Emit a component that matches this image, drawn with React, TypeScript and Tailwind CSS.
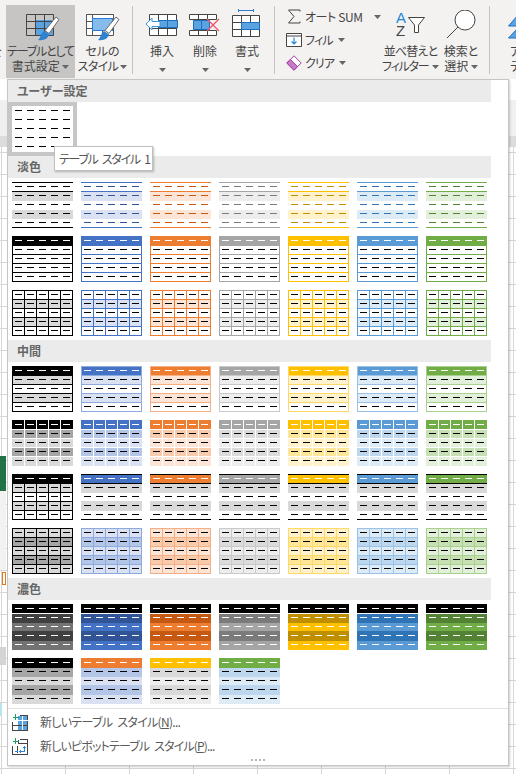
import React from 'react';

// Tabellen-Vorschauen: 61x46 px, 5 Spalten, 5 Zeilen
const DX = [3, 15, 27, 39, 51];
const DY = [4, 13, 22, 31, 40];

type Accent = { a: string; d: string; light: string; mid: string; border: string; d2a: string; d2b: string };

const ACCENTS: Accent[] = [
  { a: '#000000', d: '#000000', light: '#d9d9d9', mid: '#a6a6a6', border: '#000000', d2a: '#404040', d2b: '#737373' },
  { a: '#4472c4', d: '#305496', light: '#d9e1f2', mid: '#b4c6e7', border: '#8ea9db', d2a: '#305496', d2b: '#4472c4' },
  { a: '#ed7d31', d: '#c65911', light: '#fce4d6', mid: '#f8cbad', border: '#f4b084', d2a: '#c65911', d2b: '#ed7d31' },
  { a: '#a5a5a5', d: '#7b7b7b', light: '#ededed', mid: '#dbdbdb', border: '#c9c9c9', d2a: '#7b7b7b', d2b: '#a5a5a5' },
  { a: '#ffc000', d: '#bf8f00', light: '#fff2cc', mid: '#ffe699', border: '#ffd966', d2a: '#bf8f00', d2b: '#ffc000' },
  { a: '#5b9bd5', d: '#2f75b5', light: '#ddebf7', mid: '#bdd7ee', border: '#9bc2e6', d2a: '#2f75b5', d2b: '#5b9bd5' },
  { a: '#70ad47', d: '#548235', light: '#e2efda', mid: '#c6e0b4', border: '#a9d08e', d2a: '#548235', d2b: '#70ad47' },
];

type R = [number, number, number, number, string];

const box = (c: string): R[] => [
  [0, 0, 61, 1, c],
  [0, 45, 61, 1, c],
  [0, 0, 1, 46, c],
  [60, 0, 1, 46, c],
];
const hLines = (c: string): R[] => [9, 18, 27, 36].map((y) => [0, y, 61, 1, c] as R);
const vLines = (c: string): R[] => [12, 24, 36, 48].map((x) => [x, 0, 1, 46, c] as R);

function Swatch({ rects, dash }: { rects: R[]; dash: (row: number) => string }) {
  return (
    <svg width={61} height={46} viewBox="0 0 61 46" shapeRendering="crispEdges" className="block">
      {rects.map((r, i) => (
        <rect key={i} x={r[0]} y={r[1]} width={r[2]} height={r[3]} fill={r[4]} />
      ))}
      {DY.map((y, row) =>
        DX.map((x) => <rect key={`${row}-${x}`} x={x} y={y} width={7} height={1} fill={dash(row)} />)
      )}
    </svg>
  );
}

const headerWhite = (row: number) => (row === 0 ? '#ffffff' : '#000000');

// Zeilen im Stil "Zellen mit weißen Trennlinien"
function cellRects(head: string, dark: string, light: string): R[] {
  return [
    [0, 0, 61, 9, head],
    [0, 10, 61, 8, dark],
    [0, 19, 61, 8, light],
    [0, 28, 61, 8, dark],
    [0, 37, 61, 9, light],
    ...vLines('#ffffff'),
  ];
}

const lightStyles = [
  ACCENTS.map((c) => (
    <Swatch
      rects={[
        [0, 10, 61, 9, c.light],
        [0, 28, 61, 9, c.light],
        [0, 0, 61, 1, c.a],
        [0, 9, 61, 1, c.a],
        [0, 45, 61, 1, c.a],
      ]}
      dash={() => c.d}
    />
  )),
  ACCENTS.map((c) => (
    <Swatch rects={[[0, 0, 61, 9, c.a], ...box(c.a), ...hLines(c.a)]} dash={headerWhite} />
  )),
  ACCENTS.map((c) => (
    <Swatch
      rects={[
        [0, 9, 61, 9, c.light],
        [0, 27, 61, 9, c.light],
        ...box(c.a),
        ...hLines(c.a),
        ...vLines(c.a),
      ]}
      dash={() => '#000000'}
    />
  )),
];

const mediumStyles = [
  ACCENTS.map((c) => (
    <Swatch
      rects={[
        [0, 0, 61, 9, c.a],
        [0, 9, 61, 9, c.light],
        [0, 27, 61, 9, c.light],
        ...box(c.border),
        ...hLines(c.border),
      ]}
      dash={headerWhite}
    />
  )),
  ACCENTS.map((c) => <Swatch rects={cellRects(c.a, c.mid, c.light)} dash={headerWhite} />),
  ACCENTS.map((c, i) =>
    i === 0 ? (
      <Swatch
        rects={[
          [0, 0, 61, 9, '#000000'],
          [0, 9, 61, 9, '#d9d9d9'],
          [0, 27, 61, 9, '#d9d9d9'],
          ...box('#000000'),
          ...hLines('#000000'),
          ...vLines('#000000'),
        ]}
        dash={headerWhite}
      />
    ) : (
      <Swatch
        rects={[
          [0, 0, 61, 9, c.a],
          [0, 0, 61, 1, '#000000'],
          [0, 9, 61, 1, '#000000'],
          [0, 10, 61, 9, '#d9d9d9'],
          [0, 27, 61, 10, '#d9d9d9'],
          [0, 45, 61, 1, '#000000'],
        ]}
        dash={headerWhite}
      />
    )
  ),
  ACCENTS.map((c) => (
    <Swatch
      rects={[
        [0, 0, 61, 46, c.light],
        [0, 9, 61, 9, c.mid],
        [0, 27, 61, 9, c.mid],
        ...box(c.border),
        ...hLines(c.border),
        ...vLines(c.border),
      ]}
      dash={() => '#000000'}
    />
  )),
];

const darkRow1 = ACCENTS.map((c) => (
  <Swatch
    rects={[
      [0, 0, 61, 9, '#000000'],
      [0, 10, 61, 9, c.d2a],
      [0, 19, 61, 8, c.d2b],
      [0, 27, 61, 10, c.d2a],
      [0, 37, 61, 9, c.d2b],
    ]}
    dash={() => '#ffffff'}
  />
));

const stripe = (head: string, dark: string, light: string): R[] => [
  [0, 0, 61, 10, head],
  [0, 10, 61, 9, dark],
  [0, 19, 61, 8, light],
  [0, 27, 61, 10, dark],
  [0, 37, 61, 9, light],
];

const darkRow2 = [
  stripe('#000000', '#a6a6a6', '#d9d9d9'),
  stripe('#ed7d31', '#b4c6e7', '#d9e1f2'),
  stripe('#ffc000', '#d9d9d9', '#ededed'),
  stripe('#70ad47', '#bdd7ee', '#ddebf7'),
].map((rects) => <Swatch rects={rects} dash={headerWhite} />);

function Section({ title }: { title: string }) {
  return (
    <div className="h-[22px] w-[483px] bg-[#ebebeb] pl-[9px] text-[12px] font-bold leading-[21px] text-[#666666]">
      {title}
    </div>
  );
}

function Rows({ rows }: { rows: React.ReactNode[][] }) {
  return (
    <div className="flex w-[483px] flex-col gap-2 p-1">
      {rows.map((row, i) => (
        <div key={i} className="flex gap-2">
          {row.map((cell, j) => (
            <div key={j}>{cell}</div>
          ))}
        </div>
      ))}
    </div>
  );
}

function Caret({ className = '' }: { className?: string }) {
  return (
    <svg width={7} height={4} viewBox="0 0 7 4" className={`inline-block ${className}`}>
      <path d="M0 0h7L3.5 4z" fill="#666666" />
    </svg>
  );
}

function Brush() {
  return (
    <g>
      <path d="M30 7l3 2.500-10 14-4-3z" fill="#ffffff" stroke="#6b6b6b" />
      <path d="M18 21l5 3.500c-1 4-5 6.500-11 5.500 3-2 2.500-7 6-9z" fill="#2e83d0" />
    </g>
  );
}

function TableStyleIcon() {
  return (
    <svg width={34} height={32} viewBox="0 0 34 32" className="mb-px ml-[5px]">
      <rect x="9.500" y="10" width="18" height="15" fill="#5ba3e0" />
      <path d="M.5 4.500h27v21H.5zM.5 11.500h27M.5 18.500h27M9.500 4.500v21M18.500 4.500v21" fill="none" stroke="#444444" />
      <Brush />
    </svg>
  );
}

function CellStyleIcon() {
  return (
    <svg width={34} height={32} viewBox="0 0 34 32" className="mb-px">
      <path d="M.5 4.500h27v21H.5z" fill="#ffffff" stroke="#555555" />
      <path d="M.5 11.500h6M.5 18.500h6M6.500 4.500v21M16.500 20v5M.5 4.500h27" fill="none" stroke="#555555" />
      <rect x="6.500" y="8.500" width="20" height="12" fill="#85bcec" stroke="#2b7cd3" />
      <Brush />
    </svg>
  );
}

function InsertIcon() {
  return (
    <svg width={34} height={26} viewBox="0 0 34 26" className="mb-[4px]">
      <path d="M4.500 1.500h27v21h-27zM4.500 15.500h27M13.500 1.500v21M22.500 1.500v21" fill="#ffffff" stroke="#444444" />
      <rect x="13.500" y="7.500" width="19" height="7" fill="#5ba3e0" stroke="#1f6fbf" />
      <path d="M22.500 7.500v7" stroke="#1f6fbf" />
      <path d="M1 11l6-6v3.500h8v5H7V17z" fill="#ffffff" stroke="#3a96dd" />
    </svg>
  );
}

function DeleteIcon() {
  return (
    <svg width={34} height={26} viewBox="0 0 34 26" className="mb-[4px]">
      <path d="M1.500 1.500h27v5h-27zM1.500 17.500h27v5h-27zM10.500 1.500v5M19.500 1.500v5M10.500 17.500v5M19.500 17.500v5" fill="#ffffff" stroke="#444444" />
      <path d="M5.500 7.500h16v9h-16z" fill="#5ba3e0" stroke="#1f6fbf" />
      <path d="M13.500 7.500v9" stroke="#1f6fbf" />
      <path d="M19 6l12 12M31 6L19 18" stroke="#f0526a" strokeWidth="1.300" fill="none" />
    </svg>
  );
}

function FormatIcon() {
  return (
    <svg width={30} height={28} viewBox="0 0 30 28" className="mb-[6px]">
      <path d="M.5 6.500h27v21H.5z" fill="#ffffff" stroke="#444444" />
      <path d="M.5 13.500h27M.5 20.500h27M9.500 6.500v21M18.500 6.500v21" stroke="#444444" />
      <rect x="9.500" y="13.500" width="18" height="7" fill="#5ba3e0" stroke="#1f6fbf" />
      <path d="M6.500 1.500h15M6.500 0v3M21.500 0v3" stroke="#2b7cd3" />
    </svg>
  );
}

function RibbonButton({
  icon,
  lines,
  active,
  width,
}: {
  icon: React.ReactNode;
  lines: React.ReactNode[];
  active?: boolean;
  width: string;
}) {
  return (
    <div className={`flex h-[73px] shrink-0 flex-col items-center text-[12px] leading-[15px] text-[#444444] ${width} ${active ? 'bg-[#c6c5c3]' : ''}`}>
      <div className="flex h-[38px] items-end">{icon}</div>
      {lines.map((l, i) => (
        <div key={i} className="whitespace-nowrap">
          {l}
        </div>
      ))}
    </div>
  );
}

function Divider() {
  return <div className="mx-px mt-[1px] h-[68px] w-px shrink-0 bg-[#c4c4c4]" />;
}

function SmallAction({ icon, label }: { icon: React.ReactNode; label: React.ReactNode }) {
  return (
    <div className="flex h-[23px] items-center gap-[3px] whitespace-nowrap text-[12px] text-[#444444]">
      <div className="flex w-[17px] justify-center">{icon}</div>
      {label}
    </div>
  );
}

function Ribbon() {
  return (
    <div className="flex h-[79px] items-start bg-[#f3f2f1] pt-[5px]">
      <div className="mt-[38px] w-[6px] shrink-0 overflow-hidden text-[12px] leading-[15px] text-[#555555]">
        <span className="ml-[-9px] inline-block">を</span>
      </div>
      <RibbonButton
        active
        width="w-[69px]"
        icon={<TableStyleIcon />}
        lines={[<span className="tracking-[-1.200px]">テーブルとして</span>, <>書式設定 <Caret className="mb-[2px]" /></>]}
      />
      <RibbonButton
        width="w-[55px]"
        icon={<CellStyleIcon />}
        lines={['セルの', <span className="tracking-[-0.600px]">スタイル <Caret className="mb-[2px]" /></span>]}
      />
      <div className="ml-[1px] mr-[6px]"><Divider /></div>
      <RibbonButton width="w-[44px]" icon={<InsertIcon />} lines={['挿入', <Caret className="mt-[4px] block" />]} />
      <RibbonButton width="w-[42px]" icon={<DeleteIcon />} lines={['削除', <Caret className="mt-[4px] block" />]} />
      <RibbonButton width="w-[42px]" icon={<FormatIcon />} lines={['書式', <Caret className="mt-[4px] block" />]} />
      <div className="ml-[5px]"><Divider /></div>
      <div className="ml-[9px] flex w-[101px] shrink-0 flex-col">
        <SmallAction
          icon={
            <svg width={14} height={15} viewBox="0 0 14 15">
              <path d="M13 2.500V1H1.500L7 7.500 1.500 14H13v-1.500" fill="none" stroke="#444444" />
            </svg>
          }
          label={<span className="tracking-[-0.400px]">オート SUM<Caret className="mb-[2px] ml-[11px]" /></span>}
        />
        <SmallAction
          icon={
            <svg width={16} height={14} viewBox="0 0 16 14">
              <path d="M.5.500h15v13H.5zM.5 3h15" fill="#ffffff" stroke="#444444" />
              <path d="M8 4.500v6M5.500 8.500L8 11l2.500-2.500" fill="none" stroke="#1f8ad6" strokeWidth="1.200" />
            </svg>
          }
          label={<span className="tracking-[-0.800px]">フィル<Caret className="mb-[2px] ml-[5px]" /></span>}
        />
        <SmallAction
          icon={
            <svg width={16} height={16} viewBox="0 0 16 16">
              <path d="M8 .800L15.200 8 8 15.200.800 8z" fill="#ffffff" stroke="#a33fa3" />
              <path d="M4.500 4.500L11.500 11.500 8 15.200.800 8z" fill="#c77bc7" stroke="#a33fa3" />
            </svg>
          }
          label={<span className="tracking-[-0.800px]">クリア<Caret className="mb-[2px] ml-[5px]" /></span>}
        />
      </div>
      <RibbonButton
        width="w-[49px]"
        icon={
          <div className="relative mb-px h-[32px] w-[29px]">
            <span className="absolute left-0 top-0 font-['Liberation_Sans',sans-serif] text-[15px] leading-[15px] text-[#1f8ad6]">A</span>
            <span className="absolute bottom-[4px] left-0 font-['Liberation_Sans',sans-serif] text-[15px] leading-[15px] text-[#444444]">Z</span>
            <svg width={17} height={16} viewBox="0 0 17 16" className="absolute right-0 top-[7px]">
              <path d="M.500.500h16L10.500 8v7.500h-4V8z" fill="#ffffff" stroke="#444444" />
            </svg>
          </div>
        }
        lines={[<span className="tracking-[-0.800px]">並べ替えと</span>, <span className="tracking-[-1.200px]">フィルター <Caret className="mb-[2px] ml-[2px]" /></span>]}
      />
      <RibbonButton
        width="w-[52px]"
        icon={
          <svg width={30} height={32} viewBox="0 0 30 32" className="mb-px">
            <circle cx="19" cy="10" r="10" fill="#ffffff" stroke="#444444" />
            <path d="M12 17L1 28" stroke="#444444" />
          </svg>
        }
        lines={['検索と', <>選択 <Caret className="mb-[2px]" /></>]}
      />
      <div className="ml-[1px]"><Divider /></div>
      <div className="ml-[17px] flex w-[8px] flex-col overflow-hidden text-[12px] leading-[15px] text-[#444444]">
        <svg width={22} height={38} viewBox="0 0 22 38" className="shrink-0">
          <path d="M10 10L.5 21h19z" fill="#5ba3e0" stroke="#1f6fbf" />
          <path d="M10 23L.5 33h19z" fill="#5ba3e0" stroke="#1f6fbf" />
        </svg>
        <div className="pl-[2px]">ア</div>
        <div className="pl-[2px]">デ</div>
      </div>
    </div>
  );
}

function NewTableIcon() {
  return (
    <svg width={17} height={17} viewBox="0 0 17 17" shapeRendering="crispEdges">
      <path d="M.5 7.500v9h15V1.500H8" fill="none" stroke="#444444" />
      <path d="M.5 11.500h15M6 7.500v9M11 1.500v15M6 6.500h10" fill="none" stroke="#444444" />
      <rect x="6" y="2" width="9" height="9" fill="#5ba3e0" />
      <rect x="6" y="12" width="9" height="4" fill="#5ba3e0" />
      <path d="M10.500 2v14M6 6.500h10" stroke="#ffffff" />
      <path d="M3.500 0v6M.5 3h6" stroke="#1aa260" />
    </svg>
  );
}

function NewPivotIcon() {
  return (
    <svg width={17} height={17} viewBox="0 0 17 17" shapeRendering="crispEdges">
      <path d="M.5 7.500v9h15V1.500H8M6 1.500v4h9.500" fill="none" stroke="#444444" />
      <path d="M5 8h1v7H5z" fill="#444444" />
      <path d="M3 13h3M9 13.500h3.500V9.500" fill="none" stroke="#2b88d8" />
      <path d="M11 10l1.500-2 1.500 2zM9 12v3l-2-1.500z" fill="#2b88d8" />
      <path d="M3.500 0v6M.5 3h6" stroke="#1aa260" />
    </svg>
  );
}

function MenuItem({ icon, label, hotkey, rest, tracking }: { icon: React.ReactNode; label: string; hotkey: string; rest: string; tracking: string }) {
  return (
    <div className="flex h-6 items-center pl-1 text-[12px] text-[#5a5a5a]">
      <div className="flex w-[28px] justify-start">{icon}</div>
      <span className={`whitespace-nowrap [word-spacing:3px] ${tracking}`}>
        {label}(<span className="underline">{hotkey}</span>){rest}
      </span>
    </div>
  );
}

function StyleMenu() {
  return (
    <div className="absolute left-[7px] top-[79px] h-[687px] w-[502px] border border-[#c6c6c6] bg-white shadow-[1px_1px_2px_rgba(0,0,0,0.2)]">
      <Section title="ユーザー設定" />
      <div className="h-[54px] w-[69px] border-4 border-[#c6c6c6]">
        <Swatch rects={[]} dash={() => '#000000'} />
      </div>
      <Section title="淡色" />
      <Rows rows={lightStyles} />
      <Section title="中間" />
      <Rows rows={mediumStyles} />
      <Section title="濃色" />
      <Rows rows={[darkRow1, darkRow2]} />
      <div className="h-px w-full bg-[#e1e1e1]" />
      <div className="pt-[1px]">
        <MenuItem icon={<NewTableIcon />} label="新しいテーブル スタイル" hotkey="N" rest="..." tracking="tracking-[-0.700px]" />
        <MenuItem icon={<NewPivotIcon />} label="新しいピボットテーブル スタイル" hotkey="P" rest="..." tracking="tracking-[-0.850px]" />
      </div>
      {/* Griff zum Vergrößern unten */}
      <div className="flex justify-center gap-[2px] pr-[1px] pt-[1px]">
        {[0, 1, 2, 3].map((i) => (
          <div key={i} className="h-[2px] w-[2px] bg-[#b5b5b5]" />
        ))}
      </div>
      <div className="absolute left-[46px] top-[66px] flex h-[25px] w-[99px] items-center whitespace-nowrap border border-[#c0c0c0] bg-white pl-[4px] text-[12px] tracking-[-1.300px] text-[#555555] shadow-[1px_1px_2px_rgba(0,0,0,0.25)] [word-spacing:3px]">
        テーブル スタイル 1
      </div>
    </div>
  );
}

function Sheet() {
  return (
    <div className="flex flex-1 flex-col">
      <div className="h-[21px] bg-white" />
      <div className="h-[36px] bg-[#f0f0f0]" />
      <div className="h-[11px] bg-[#dcdcdc]" />
      <div className="flex-1 bg-white bg-[linear-gradient(#d6d6d6_1px,transparent_1px),linear-gradient(90deg,#d6d6d6_1px,transparent_1px)] bg-[size:64px_22px] bg-[position:1px_5px]" />
    </div>
  );
}

export default function App() {
  return (
    <div className="relative flex h-[774px] w-[516px] flex-col overflow-hidden bg-white font-['Noto_Sans_CJK_JP','Noto_Sans',sans-serif] [font-feature-settings:'palt']">
      <Ribbon />
      <Sheet />
      {/* Reste der Tabelle links neben dem Menü */}
      <div className="absolute left-0 top-[456px] h-[35px] w-[6px] bg-[#217346]" />
      <div className="absolute left-0 top-[491px] h-[79px] w-[6px] bg-[#f3f2f1]" />
      <div className="absolute left-[2px] top-[572px] h-[13px] w-[4px] border border-[#e07b1a]" />
      <div className="absolute left-0 top-[647px] h-[18px] w-[6px] bg-[#d4d4d4]" />
      <div className="absolute left-0 top-[703px] h-[13px] w-[2px] bg-[#b7e6ea]" />
      <StyleMenu />
    </div>
  );
}
